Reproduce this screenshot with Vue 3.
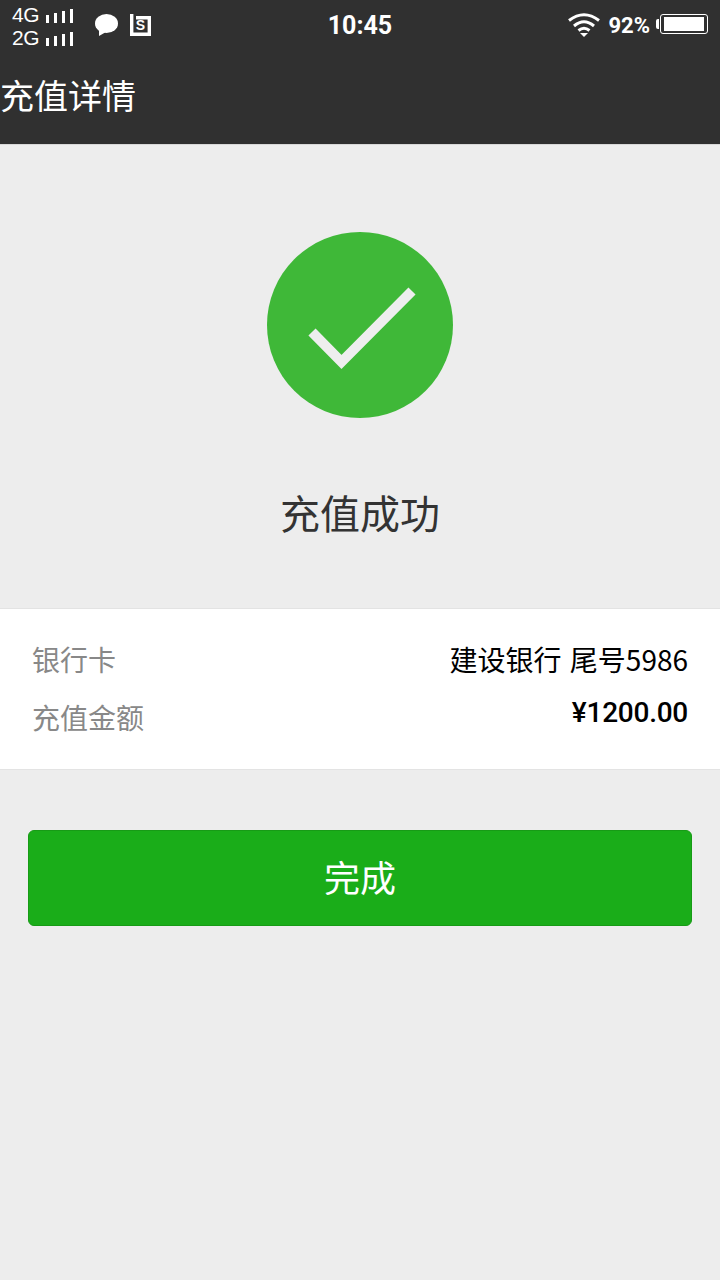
<template>
  <div class="page">
    <header class="top-bar">
      <div class="status-bar">
        <div class="status-left">
          <div class="networks">
            <div v-for="net in networks" :key="net" class="network">
              <span class="network-name">{{ net }}</span>
              <span class="signal">
                <i v-for="h in signalHeights" :key="h" :style="{ height: h + 'px' }"></i>
              </span>
            </div>
          </div>
          <svg class="icon-chat" width="25" height="24" viewBox="0 0 25 24">
            <ellipse cx="12.5" cy="10.5" rx="11.5" ry="9.5" fill="#fff" />
            <path d="M5 16 L5 23 L12 19 Z" fill="#fff" />
          </svg>
          <svg class="icon-sim" width="21" height="22" viewBox="0 0 21 22">
            <path d="M1.700 0 V20.300 H19.300 V3.700 H6" fill="none" stroke="#fff" stroke-width="3.400" />
            <text x="10.5" y="16" text-anchor="middle" class="sim-letter">S</text>
          </svg>
        </div>
        <div class="status-time">10:45</div>
        <div class="status-right">
          <svg class="icon-wifi" width="34" height="26" viewBox="0 0 34 26">
            <g fill="none" stroke="#fff" stroke-width="3">
              <path d="M2 8.5 Q17 -3 32 8.5" />
              <path d="M7 14 Q17 5.5 27 14" />
              <path d="M11.5 18.5 Q17 14 22.500 18.500" />
            </g>
            <path d="M13 21 H21 L17 25 Z" fill="#fff" />
          </svg>
          <span class="battery-text">92%</span>
          <div class="battery">
            <span class="battery-nub"></span>
            <div class="battery-shell"><div class="battery-fill"></div></div>
          </div>
        </div>
      </div>
      <div class="nav-title">充值详情</div>
    </header>

    <section class="result">
      <svg class="result-icon" width="186" height="186" viewBox="0 0 186 186">
        <circle cx="93" cy="93" r="93" fill="#3fb838" />
        <path d="M45 100 L74.500 130 L145 59" fill="none" stroke="#eeeeee" stroke-width="10" stroke-linejoin="miter" />
      </svg>
      <h1 class="result-text">充值成功</h1>
    </section>

    <section class="detail">
      <div class="detail-labels">
        <div v-for="row in rows" :key="row.label" class="detail-label">{{ row.label }}</div>
      </div>
      <div class="detail-values">
        <div v-for="row in rows" :key="row.label" class="detail-value" :class="{ strong: row.strong }">{{ row.value }}</div>
      </div>
    </section>

    <div class="actions">
      <button class="done-btn" type="button">完成</button>
    </div>
  </div>
</template>

<script setup>
const networks = ['4G', '2G']
const signalHeights = [8, 10, 12, 14]

const rows = [
  { label: '银行卡', value: '建设银行 尾号5986' },
  { label: '充值金额', value: '¥1200.00', strong: true }
]
</script>

<style>
html,
body {
  margin: 0;
  background: #ededed;
}
</style>

<style scoped>
.page {
  min-height: 1280px;
  background: #ededed;
  font-family: "Noto Sans CJK SC", "Noto Sans", sans-serif;
  overflow: hidden;
}

.top-bar {
  height: 144px;
  background: #303030;
  border-bottom: 1px solid #d8d8d8;
  color: #fff;
}

.status-bar {
  height: 50px;
  display: grid;
  grid-template-columns: 1fr auto 1fr;
  align-items: center;
  padding: 0 12px;
}

.status-left {
  display: flex;
  align-items: center;
}

.networks {
  width: 61px;
}

.network {
  display: flex;
  align-items: flex-end;
  justify-content: space-between;
  height: 23px;
  font-family: "Liberation Sans", sans-serif;
  font-size: 21px;
  line-height: 20px;
  letter-spacing: -0.5px;
}

.signal {
  display: flex;
  align-items: flex-end;
  gap: 5px;
  margin-bottom: 2px;
}

.signal i {
  display: block;
  width: 3px;
  background: #fff;
}

.icon-chat {
  margin-left: 21px;
}

.icon-sim {
  margin-left: 11px;
}

.sim-letter {
  font-family: "Liberation Sans", sans-serif;
  font-size: 14px;
  font-weight: 700;
  fill: #fff;
}

.status-time {
  font-family: Roboto, sans-serif;
  font-size: 25px;
  font-weight: 700;
}

.status-right {
  display: flex;
  align-items: center;
  justify-content: flex-end;
}

.battery-text {
  margin-left: 7px;
  font-family: Roboto, sans-serif;
  font-size: 22px;
  font-weight: 700;
}

.battery {
  display: flex;
  align-items: center;
  margin: -2px 0 0 6px;
}

.battery-nub {
  width: 3px;
  height: 10px;
  margin-right: 1px;
  background: #fff;
  border-radius: 2px 0 0 2px;
}

.battery-shell {
  width: 48px;
  height: 20px;
  box-sizing: border-box;
  padding: 2px 3px;
  border: 1px solid #fff;
  border-radius: 3px;
}

.battery-fill {
  height: 100%;
  background: #fff;
}

.nav-title {
  height: 94px;
  line-height: 90px;
  font-size: 34px;
}

.result {
  height: 463px;
  display: flex;
  flex-direction: column;
  align-items: center;
  padding-top: 87px;
  box-sizing: border-box;
}

.result-icon {
  display: block;
}

.result-text {
  margin: 64px 0 0;
  font-size: 40px;
  font-weight: 400;
  line-height: 60px;
  color: #333;
}

.detail {
  display: flex;
  justify-content: space-between;
  height: 162px;
  box-sizing: border-box;
  padding: 21px 32px 0;
  background: #fff;
  border-top: 1px solid #e3e3e3;
  border-bottom: 1px solid #e3e3e3;
  font-size: 28px;
}

.detail-label {
  height: 58px;
  line-height: 58px;
  color: #888;
}

.detail-values {
  text-align: right;
}

.detail-value {
  height: 52px;
  line-height: 58px;
  color: #000;
  word-spacing: 2px;
}

.detail-value.strong {
  font-family: Roboto, sans-serif;
  font-weight: 500;
  line-height: 62px;
  letter-spacing: -0.25px;
}

.actions {
  padding: 60px 28px 0;
}

.done-btn {
  display: block;
  width: 100%;
  height: 96px;
  padding: 0 0 4px;
  background: #1aad19;
  border: 1px solid #179b16;
  border-radius: 6px;
  color: #fff;
  font-family: inherit;
  font-size: 36px;
}
</style>
